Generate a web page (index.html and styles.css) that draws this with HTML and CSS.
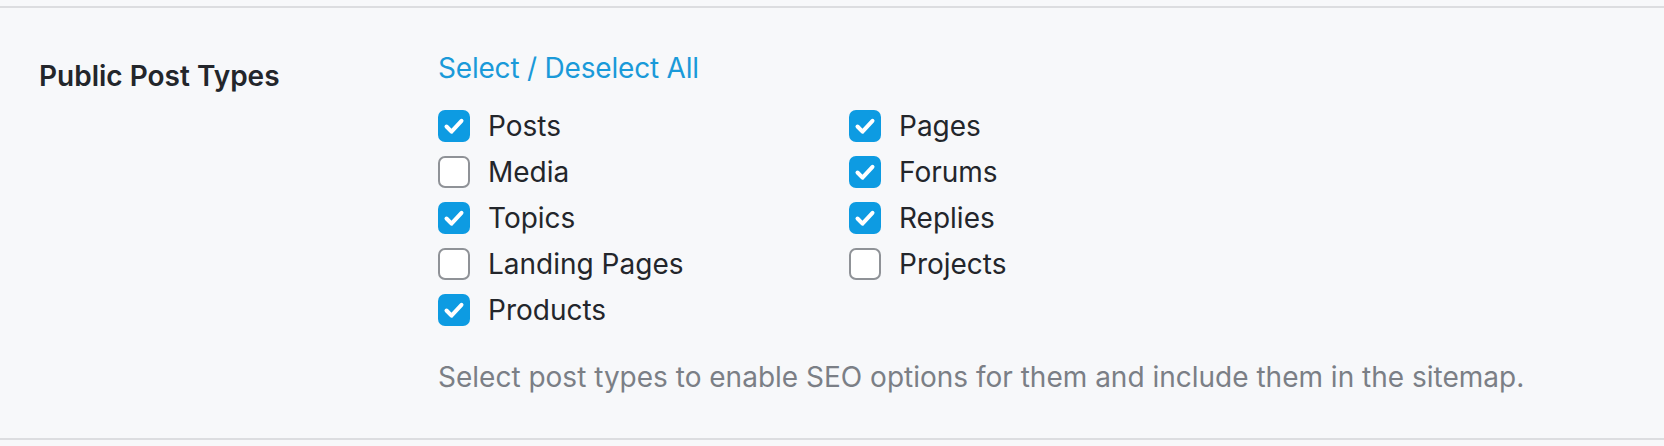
FILE: index.html
```html
<!DOCTYPE html>
<html lang="en">
<head>
<meta charset="utf-8">
<title>Public Post Types</title>
<link rel="stylesheet" href="styles.css">
</head>
<body>
<div class="page">
  <section class="field">
    <div class="field-label">Public Post Types</div>
    <div class="field-body">
      <a class="toggle-all" href="#">Select / Deselect All</a>
      <ul class="checks">
        <li><span class="box on"><svg viewBox="0 0 32 32"><path d="M8.5 16.5l5 5.2L23.5 10.8" /></svg></span>Posts</li>
        <li><span class="box on"><svg viewBox="0 0 32 32"><path d="M8.5 16.5l5 5.2L23.5 10.8" /></svg></span>Pages</li>
        <li><span class="box"></span>Media</li>
        <li><span class="box on"><svg viewBox="0 0 32 32"><path d="M8.5 16.5l5 5.2L23.5 10.8" /></svg></span>Forums</li>
        <li><span class="box on"><svg viewBox="0 0 32 32"><path d="M8.5 16.5l5 5.2L23.5 10.8" /></svg></span>Topics</li>
        <li><span class="box on"><svg viewBox="0 0 32 32"><path d="M8.5 16.5l5 5.2L23.5 10.8" /></svg></span>Replies</li>
        <li><span class="box"></span>Landing Pages</li>
        <li><span class="box"></span>Projects</li>
        <li><span class="box on"><svg viewBox="0 0 32 32"><path d="M8.5 16.5l5 5.2L23.5 10.8" /></svg></span>Products</li>
      </ul>
      <p class="desc">Select post types to enable SEO options for them and include them in the sitemap.</p>
    </div>
  </section>
</div>
</body>
</html>
```
FILE: styles.css
```css
html, body {
  margin: 0;
  padding: 0;
  background: #f7f8fa;
}
body {
  font-family: Inter, "Noto Sans", "Liberation Sans", sans-serif;
  font-size: 28px;
  line-height: 34px;
  color: #23262b;
}
.page {
  padding-top: 6px;
}
.field {
  display: flex;
  border-top: 2px solid #dcdde0;
  border-bottom: 2px solid #dcdde0;
  padding: 43px 0 44px 39px;
}
.field-label {
  width: 399px;
  flex: none;
  font-weight: 600;
  padding-top: 8px;
  color: #23262b;
}
.field-body {
  display: flex;
  flex-direction: column;
  align-items: flex-start;
}
.toggle-all {
  color: #1a9ad9;
  text-decoration: none;
  letter-spacing: -0.2px;
}
.checks {
  list-style: none;
  margin: 17.5px 0 0;
  padding: 0;
  display: grid;
  grid-template-columns: 411px auto;
  grid-auto-rows: 46px;
}
.checks li {
  display: flex;
  align-items: center;
  gap: 18px;
}
.box {
  width: 32px;
  height: 32px;
  box-sizing: border-box;
  border: 2px solid #8f9297;
  border-radius: 7px;
  background: #fff;
  flex: none;
  display: flex;
}
.box.on {
  border: none;
  background: #0d9be2;
}
.box svg {
  width: 32px;
  height: 32px;
}
.box svg path {
  fill: none;
  stroke: #fff;
  stroke-width: 4;
  stroke-linecap: round;
  stroke-linejoin: round;
}
.desc {
  margin: 27.5px 0 0;
  color: #7b7f86;
}
```
